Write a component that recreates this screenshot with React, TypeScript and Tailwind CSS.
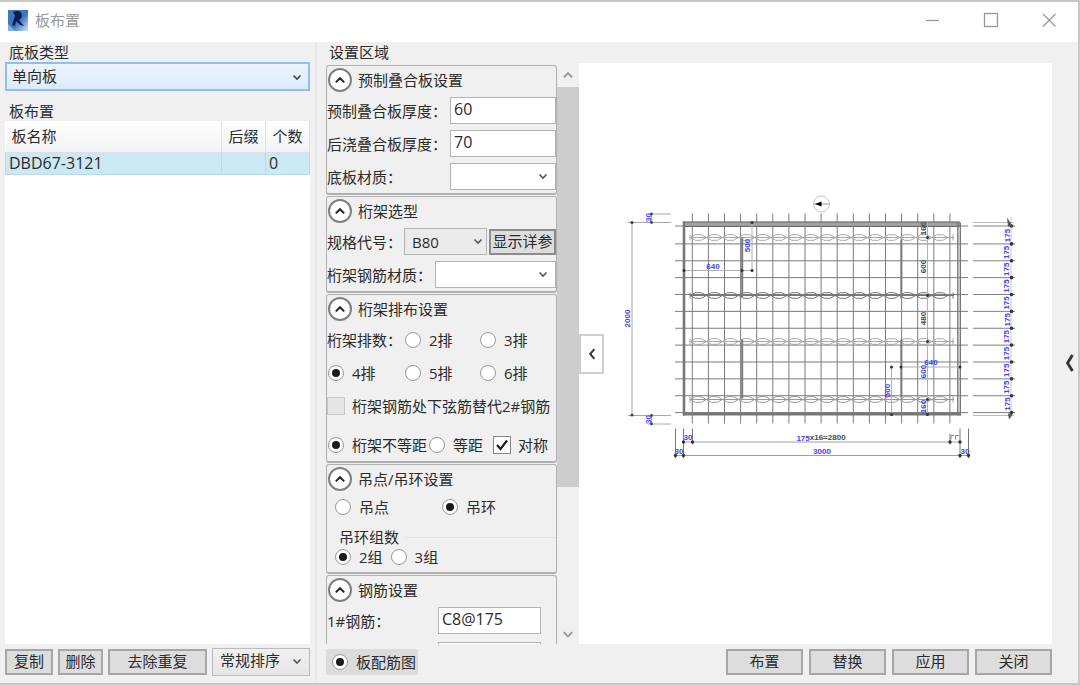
import { useState } from "react";
import type { ReactNode } from "react";
import clsx from "clsx";

const columnXs = Array.from({ length: 17 }, (_, i) => 692.3 + i * 16.1);
const rowYs = [225.5, ...Array.from({ length: 11 }, (_, i) => 243.4 + i * 16.87)];
const spacingYs = Array.from({ length: 11 }, (_, i) => 235 + i * 16.85);

const trusses = [
  { y: 237, color: "#a8a8a8" },
  { y: 295, color: "#777777" },
  { y: 341, color: "#a8a8a8" },
  { y: 399, color: "#999999" },
];

function Chevron({ className, dir = "down" }: { className?: string; dir?: "down" | "up" | "left" }) {
  const d = {
    down: "M1.5 3.5 L5 7 L8.5 3.5",
    up: "M1.5 7 L5 3.5 L8.5 7",
    left: "M7 1 L3.5 5 L7 9",
  }[dir];

  return (
    <svg viewBox="0 0 10 10" fill="none" stroke="currentColor" strokeWidth="1.6" className={className} aria-hidden="true">
      <path d={d} />
    </svg>
  );
}

type SelectProps = {
  label: string;
  options: string[];
  id?: string;
  wrapClass: string;
  className: string;
  arrowClass?: string;
};

function Select({ label, options, id, wrapClass, className, arrowClass = "right-2 top-2 size-2.5 text-[#555]" }: SelectProps) {
  return (
    <div className={clsx("relative", wrapClass)}>
      <select id={id} aria-label={label} className={clsx("h-full w-full appearance-none border outline-none", className)}>
        {options.map((option) => (
          <option key={option}>{option}</option>
        ))}
      </select>
      <Chevron className={clsx("pointer-events-none absolute", arrowClass)} />
    </div>
  );
}

function Button({ children, className }: { children: ReactNode; className?: string }) {
  return (
    <button
      type="button"
      className={clsx("flex h-[26px] items-center justify-center border-2 bg-[#dddddd] pb-0.5 leading-5 hover:bg-[#e5f1fb]", className)}
    >
      {children}
    </button>
  );
}

type RadioProps = {
  name: string;
  label: string;
  value: string;
  onChange: (value: string) => void;
  className?: string;
};

function Radio({ name, label, value, onChange, className }: RadioProps) {
  return (
    <label className={clsx("flex items-center gap-2 whitespace-nowrap", className)}>
      <input
        type="radio"
        name={name}
        checked={value === label}
        onChange={() => onChange(label)}
        className="grid size-4 shrink-0 appearance-none place-items-center rounded-full border border-[#999] bg-white before:size-2 before:rounded-full checked:before:bg-[#1a1a1a]"
      />
      {label}
    </label>
  );
}

function Panel({ title, children }: { title: string; children: ReactNode }) {
  const [open, setOpen] = useState(true);

  return (
    <section className="shrink-0 rounded-[3px] border border-b-2 border-[#b0b0b0]">
      <h3 className="flex h-7 items-center gap-[6px] pl-px">
        <button
          type="button"
          aria-label={title}
          onClick={() => setOpen(!open)}
          className="flex size-6 items-center justify-center rounded-full border-2 border-[#808080] bg-white"
        >
          <Chevron dir={open ? "up" : "down"} className="size-3 text-[#222]" />
        </button>
        {title}
      </h3>
      {open && children}
    </section>
  );
}

function TextRow({ id, label, value }: { id: string; label: string; value: string }) {
  return (
    <div className="flex h-[33px] items-center justify-between">
      <label htmlFor={id}>{label}</label>
      <input id={id} defaultValue={value} className="h-[27px] w-[106px] border border-[#b4b4b4] bg-white px-[3px] pb-1 text-base outline-none" />
    </div>
  );
}

function DimText({ x, y, children, vertical, dark }: { x: number; y: number; children: ReactNode; vertical?: boolean; dark?: boolean }) {
  return (
    <text
      x={x}
      y={y}
      textAnchor="middle"
      dominantBaseline="central"
      fontSize="8"
      fontWeight="bold"
      fill={dark ? "#4a4a4a" : "#4444ff"}
      transform={vertical ? `rotate(-90 ${x} ${y})` : undefined}
    >
      {children}
    </text>
  );
}

function SlabDrawing() {
  return (
    <svg viewBox="604 63 448 580" className="h-full min-w-0 flex-1 font-['Liberation_Sans',sans-serif]" role="img" aria-label="板配筋图">
      {/* view direction marker */}
      <circle cx="821.5" cy="203.5" r="8" fill="none" stroke="#c4c4c4" />
      <path d="M814 203.5 H829" stroke="#999" />
      <path d="M815 203.5 L821.5 201 V206 Z" fill="#000" />

      {/* rebar grid */}
      <g stroke="#7c7c7c" strokeWidth="1">
        {columnXs.map((x) => (
          <line key={x} x1={x} x2={x} y1="213" y2="423" />
        ))}
        {rowYs.map((y) => (
          <line key={y} x1="675" x2="968" y1={y} y2={y} />
        ))}
      </g>

      {/* slab edge */}
      <g fill="none" stroke="#777">
        <path d="M683 223.5 H960" strokeWidth="4.5" stroke="#a0a0a0" />
        <path d="M683 221.5 H960 M683 226 H960" strokeWidth="1" stroke="#666" />
        <path d="M684 221 V415" strokeWidth="2.6" />
        <path d="M683 413.5 H961" strokeWidth="3" />
        <path d="M957.8 222 V415 M960.3 222 V415" strokeWidth="1.4" />
      </g>

      {/* lattice girders */}
      {trusses.map(({ y, color }) => (
        <g key={y} fill="none" stroke={color}>
          {columnXs.slice(0, 16).map((x) => (
            <path key={x} d={`M${x - 2} ${y} L${x + 3} ${y - 2.8} H${x + 9} L${x + 14} ${y} L${x + 9} ${y + 2.8} H${x + 3} Z`} />
          ))}
          <path d={`M690 ${y} H954`} strokeWidth="1" />
          <path d={`M690 ${y - 3} V${y + 3} M953 ${y - 3} V${y + 3}`} />
        </g>
      ))}
      <path d="M742.2 237 V297 M742.2 339 V398 M901.3 239 V298 M901.3 339 V397" stroke="#7a7a7a" strokeWidth="2" />

      {/* inner dimensions */}
      <g stroke="#b0b0b0" strokeWidth="1" fill="none">
        <path d="M684 270 H754 M752 222 V270 M891.5 366 V414 M901 366.5 H960 M927.5 222 V414" />
      </g>
      <g fill="#333">
        {[
          [684, 270], [742, 270], [752, 270], [752, 222], [891.5, 366.5], [891.5, 414], [901, 366.5], [960, 366.5],
          [927.5, 237], [927.5, 295], [927.5, 341], [927.5, 399], [927.5, 414],
        ].map(([x, y]) => (
          <circle key={`${x}-${y}`} cx={x} cy={y} r="1.5" />
        ))}
      </g>
      <DimText x={713} y={266}>640</DimText>
      <DimText x={747} y={245} vertical>500</DimText>
      <DimText x={923} y={228} vertical dark>160</DimText>
      <DimText x={923} y={266} vertical dark>600</DimText>
      <DimText x={923} y={318} vertical dark>480</DimText>
      <DimText x={931} y={362}>640</DimText>
      <DimText x={923} y={371} vertical>600</DimText>
      <DimText x={887} y={390} vertical>500</DimText>
      <DimText x={923} y={406} vertical>160</DimText>

      {/* left dimension chain */}
      <g stroke="#a8a8a8" fill="none">
        <path d="M632 222 V415 M628 222 H671 M628 415 H671 M648 213.5 H671 M648 423.5 H671 M651.5 213 V222 M651.5 415 V424" />
      </g>
      <g fill="#444">
        <circle cx="632" cy="222" r="1.6" />
        <circle cx="632" cy="414.5" r="1.6" />
        <circle cx="651.5" cy="213.5" r="1.4" />
        <circle cx="651.5" cy="222" r="1.4" />
        <circle cx="651.5" cy="415" r="1.4" />
        <circle cx="651.5" cy="423.5" r="1.4" />
      </g>
      <DimText x={627} y={318} vertical>2000</DimText>
      <DimText x={648} y={217} vertical>30</DimText>
      <DimText x={648} y={419} vertical>30</DimText>

      {/* right dimension chain */}
      <g stroke="#808080">
        <path d="M973 222 H1014" stroke="#bbb" />
        {rowYs.map((y) => (
          <line key={y} x1="973" x2="1015" y1={y} y2={y} />
        ))}
        <path d="M973 415 H1014" stroke="#bbb" />
        <path d="M1011 217 V418" stroke="#c8c8c8" />
      </g>
      {rowYs.map((y) => (
        <circle key={y} cx="1011.5" cy={y} r="1.8" fill="#333" />
      ))}
      {spacingYs.map((y) => (
        <DimText key={y} x={1007} y={y} vertical>175</DimText>
      ))}
      <path d="M1007 217 L1013 226 H1008 Z M1008 413 L1013 413 L1009 419 Z" fill="#555" />

      {/* bottom dimension chains */}
      <g stroke="#a0a0a0" fill="none">
        <path d="M684 441.5 H960 M675 455 H969" />
        <path d="M675.5 428 V458 M683.5 428 V458 M692.5 428 V444 M950 433 V444 M960 428 V458 M968.5 428 V458" stroke="#777" />
      </g>
      <g fill="#333">
        {[683.5, 692.5, 950, 960].map((x) => (
          <circle key={x} cx={x} cy="441.5" r="1.7" />
        ))}
        {[675.5, 683.5, 960, 968.5].map((x) => (
          <circle key={x} cx={x} cy="455" r="1.7" />
        ))}
      </g>
      <DimText x={688} y={437}>30</DimText>
      <DimText x={679} y={451}>30</DimText>
      <DimText x={965} y={451}>30</DimText>
      <DimText x={821} y={437} dark>
        <tspan fill="#4444ff">175</tspan>x16=2800
      </DimText>
      <DimText x={822} y={451}>3000</DimText>
      <path d="M951 439 V435 H954 M955.5 439 V435 H959" stroke="#888" fill="none" />
    </svg>
  );
}

function TitleBar() {
  return (
    <header className="flex h-10 shrink-0 items-center justify-between bg-white pb-1 pl-2 pr-5 text-[#999]">
      <h1 className="flex items-center gap-[7px]">
        <svg viewBox="0 0 20 21" className="h-[21px] w-5" aria-hidden="true">
          <defs>
            <linearGradient id="logo-bg" x1="0" y1="0" x2="1" y2="1">
              <stop offset="0" stopColor="#3f78bd" />
              <stop offset="0.55" stopColor="#3b78c4" />
              <stop offset="1" stopColor="#d4e6f7" />
            </linearGradient>
          </defs>
          <rect width="20" height="21" fill="url(#logo-bg)" />
          <path d="M0 14 L7 21 H0 Z" fill="#7fb0e0" />
          <path d="M5 2 C9 0 14 1 14 5 C14 8 12 9 11 10 L16 16 L12 15 L8 11 L7 16 L4 15 L7 6 Z" fill="#0d1c4f" />
        </svg>
        板布置
      </h1>
      <div className="flex items-center gap-10">
        <button type="button" aria-label="最小化" className="flex h-5 w-[18px] items-center justify-center">
          <svg viewBox="0 0 18 18" className="size-[18px]" stroke="#999" strokeWidth="1.3">
            <path d="M2 9.5 H15" />
          </svg>
        </button>
        <button type="button" aria-label="最大化" className="flex h-5 w-[18px] items-center justify-center">
          <svg viewBox="0 0 18 18" className="size-[18px]" fill="none" stroke="#999" strokeWidth="1.3">
            <rect x="2.5" y="2.5" width="13" height="13" />
          </svg>
        </button>
        <button type="button" aria-label="关闭窗口" className="flex h-5 w-[18px] items-center justify-center">
          <svg viewBox="0 0 18 18" className="size-[18px]" stroke="#999" strokeWidth="1.3">
            <path d="M3 3 L15.500 15.500 M15.500 3 L3 15.500" />
          </svg>
        </button>
      </div>
    </header>
  );
}

function SlabList() {
  return (
    <aside className="flex w-[317px] shrink-0 flex-col border-r-2 border-[#e3e8ee] pl-[5px] pr-[5px]">
      <label htmlFor="slab-type" className="h-5 pl-1 leading-5">底板类型</label>
      <Select
        id="slab-type"
        label="底板类型"
        options={["单向板", "双向板"]}
        wrapClass="h-[29px] shrink-0"
        className="border-2 border-[#92bfe9] bg-linear-to-b from-[#ecf4fc] to-[#dcecfc] pb-0.5 pl-[5px]"
        arrowClass="right-2 top-2.5 size-2.5 text-[#444]"
      />
      <h2 className="mt-2.5 h-5 pl-1 leading-5">板布置</h2>
      <div className="min-h-0 flex-1 bg-white">
        <table className="w-full table-fixed text-left">
          <thead>
            <tr className="h-[31px] bg-linear-to-b from-white to-[#f1f2f4]">
              <th className="border-b border-r border-[#dcdfe3] pl-1.5 font-normal">板名称</th>
              <th className="w-11 border-b border-r border-[#dcdfe3] text-center font-normal">后缀</th>
              <th className="w-11 border-b border-r border-[#dcdfe3] text-center font-normal">个数</th>
            </tr>
          </thead>
          <tbody>
            <tr className="h-[22px] bg-[#cbe8f3] text-base leading-5">
              <td className="border border-[#b5dcea] pl-[3px]">DBD67-3121</td>
              <td className="border border-[#b5dcea]" />
              <td className="border border-[#b5dcea] pl-[3px]">0</td>
            </tr>
          </tbody>
        </table>
      </div>
      <div className="flex h-[39px] shrink-0 items-center gap-[5px] pb-1">
        <Button className="w-12 border-[#a6a6a6]">复制</Button>
        <Button className="w-[45px] border-[#a6a6a6]">删除</Button>
        <Button className="flex-1 border-[#a6a6a6]">去除重复</Button>
        <Select
          label="常规排序"
          options={["常规排序", "名称排序"]}
          wrapClass="h-7 w-[98px]"
          className="border-[#bcbcbc] bg-linear-to-b from-[#f0f0f0] to-[#e6e6e6] pb-1 pl-[7px]"
        />
      </div>
    </aside>
  );
}

function Settings() {
  const [rows, setRows] = useState("4排");
  const [spacing, setSpacing] = useState("桁架不等距");
  const [hoist, setHoist] = useState("吊环");
  const [groups, setGroups] = useState("2组");

  return (
    <div className="flex w-[231px] shrink-0 flex-col gap-px overflow-hidden pt-0.5">
      <Panel title="预制叠合板设置">
        <TextRow id="precast" label="预制叠合板厚度：" value="60" />
        <TextRow id="cast" label="后浇叠合板厚度：" value="70" />
        <div className="flex h-[33px] items-center justify-between">
          <label htmlFor="slab-material">底板材质：</label>
          <Select id="slab-material" label="底板材质" options={[""]} wrapClass="h-[27px] w-[106px]" className="border-[#b4b4b4] bg-white" />
        </div>
      </Panel>

      <Panel title="桁架选型">
        <div className="flex h-[33px] items-center">
          <label htmlFor="truss-code" className="flex-1">规格代号：</label>
          <Select
            id="truss-code"
            label="规格代号"
            options={["B80", "A80"]}
            wrapClass="mr-0.5 h-[27px] w-[83px]"
            className="border-[#b4b4b4] bg-[#ebebeb] pl-[7px]"
            arrowClass="right-1 top-2 size-2.5 text-[#555]"
          />
          <Button className="w-[67px] border-[#8c8c8c]">显示详参</Button>
        </div>
        <div className="flex h-[33px] items-center justify-between">
          <label htmlFor="truss-material">桁架钢筋材质：</label>
          <Select id="truss-material" label="桁架钢筋材质" options={[""]} wrapClass="h-[27px] w-[121px]" className="border-[#b4b4b4] bg-white" />
        </div>
      </Panel>

      <Panel title="桁架排布设置">
        <div className="grid h-[66px] grid-cols-[78px_75px_1fr] items-center">
          <span className="whitespace-nowrap">桁架排数：</span>
          <Radio name="rows" label="2排" value={rows} onChange={setRows} />
          <Radio name="rows" label="3排" value={rows} onChange={setRows} />
          <Radio name="rows" label="4排" value={rows} onChange={setRows} className="pl-px" />
          <Radio name="rows" label="5排" value={rows} onChange={setRows} />
          <Radio name="rows" label="6排" value={rows} onChange={setRows} />
        </div>
        <label className="flex h-[33px] items-center gap-[7px] whitespace-nowrap">
          <input type="checkbox" disabled className="size-[18px] shrink-0 appearance-none border border-[#c8c8c8] bg-[#e6e6e6]" />
          桁架钢筋处下弦筋替代2#钢筋
        </label>
        <div className="flex h-[39px] items-center pl-px pt-1.5">
          <Radio name="spacing" label="桁架不等距" value={spacing} onChange={setSpacing} />
          <Radio name="spacing" label="等距" value={spacing} onChange={setSpacing} className="ml-0.5" />
          <label className="ml-2.5 flex items-center gap-[7px]">
            <span className="relative flex size-[18px]">
              <input type="checkbox" defaultChecked className="peer size-[18px] appearance-none border border-[#888] bg-white" />
              <svg
                viewBox="0 0 18 18"
                className="pointer-events-none absolute inset-0 hidden peer-checked:block"
                fill="none"
                stroke="#222"
                strokeWidth="2.2"
              >
                <path d="M4 9 L7.5 13 L14 4.500" />
              </svg>
            </span>
            对称
          </label>
        </div>
      </Panel>

      <Panel title="吊点/吊环设置">
        <div className="grid h-7 grid-cols-[107px_1fr] items-center pl-2">
          <Radio name="hoist" label="吊点" value={hoist} onChange={setHoist} />
          <Radio name="hoist" label="吊环" value={hoist} onChange={setHoist} />
        </div>
        <fieldset className="mt-1.5 pb-[5px]">
          <legend className="flex h-5 w-full items-center gap-1.5 pl-3 after:h-px after:flex-1 after:bg-[#dde5ec]">吊环组数</legend>
          <div className="flex h-5 items-center gap-2 pl-2">
            <Radio name="groups" label="2组" value={groups} onChange={setGroups} />
            <Radio name="groups" label="3组" value={groups} onChange={setGroups} />
          </div>
        </fieldset>
      </Panel>

      <Panel title="钢筋设置">
        <div className="flex h-[33px] items-center justify-between pr-[15px]">
          <label htmlFor="rebar-1">1#钢筋：</label>
          <input id="rebar-1" defaultValue="C8@175" className="h-[27px] w-[103px] border border-[#b4b4b4] bg-white px-[3px] pb-1 text-base outline-none" />
        </div>
        <div className="flex h-[33px] items-center justify-end pr-[15px] pt-1">
          <input aria-label="2#钢筋" className="h-[27px] w-[103px] border border-[#b4b4b4] bg-white px-[3px] text-base outline-none" />
        </div>
      </Panel>
    </div>
  );
}

export default function App() {
  const [view, setView] = useState("板配筋图");

  return (
    <div className="flex h-screen flex-col border-b-2 border-r-2 border-t-2 border-[#c8c8c8] bg-[#f0f0f0] font-['Open_Sans','Noto_Sans_CJK_SC',sans-serif] text-[15px] leading-5 text-[#2b2b2b]">
      <TitleBar />
      <div className="flex min-h-0 flex-1">
        <SlabList />

        <main className="flex min-w-0 flex-1 flex-col pl-[9px]">
          <h2 className="h-[21px] shrink-0 pl-[3px] leading-5">设置区域</h2>
          <div className="flex min-h-0 flex-1">
            <Settings />
            <div className="flex w-[22px] shrink-0 flex-col items-center text-[#999]">
              <Chevron dir="up" className="my-1.5 size-3 shrink-0" />
              <div className="w-full flex-1 bg-[#cdcdcd]" />
              <div className="h-[27%] shrink-0 content-end pb-1">
                <Chevron className="size-3" />
              </div>
            </div>
            <div className="flex min-w-0 flex-1 items-center bg-white">
              <button type="button" aria-label="收起设置" className="flex h-10 w-[25px] shrink-0 items-center justify-center border-2 border-[#cfcfcf] bg-white">
                <Chevron dir="left" className="size-3 text-[#333]" />
              </button>
              <SlabDrawing />
            </div>
          </div>
          <div className="flex h-[39px] shrink-0 items-center justify-between pb-1">
            <Radio name="view" label="板配筋图" value={view} onChange={setView} className="h-[26px] bg-[#dcdcdc] pl-1.5 pr-0.5" />
            <div className="flex gap-1.5">
              {["布置", "替换", "应用", "关闭"].map((text) => (
                <Button key={text} className="w-[77px] border-[#a6a6a6]">{text}</Button>
              ))}
            </div>
          </div>
        </main>

        <button type="button" aria-label="展开" className="flex w-[26px] shrink-0 items-center justify-center pl-2">
          <svg viewBox="0 0 10 18" className="h-[18px] w-2.5" fill="none" stroke="#333" strokeWidth="2.8" aria-hidden="true">
            <path d="M8.500 1 L3.500 9 L8.500 17" />
          </svg>
        </button>
      </div>
    </div>
  );
}
